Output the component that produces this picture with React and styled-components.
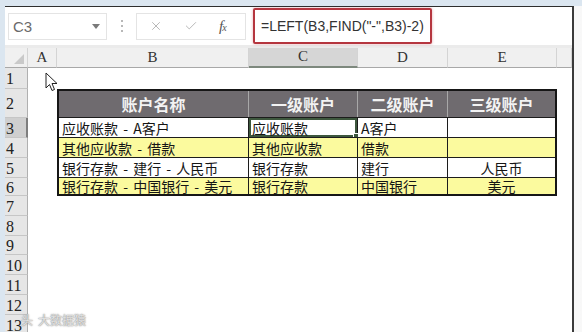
import React from 'react';
import styled, { createGlobalStyle, css } from 'styled-components';
import { X, Check } from 'lucide-react';

const GlobalStyle = createGlobalStyle`
  html, body {
    margin: 0;
    padding: 0;
    background: #fff;
  }
  * {
    box-sizing: border-box;
  }
`;

const CJK = `"Noto Sans CJK SC", "Liberation Sans", sans-serif`;
const SERIF = `"Liberation Serif", "DejaVu Serif", serif`;
const SANS = `"Liberation Sans", Arial, sans-serif`;

const Page = styled.div`
  position: relative;
  width: 582px;
  height: 332px;
  overflow: hidden;
  display: flex;
  background: linear-gradient(to right, #e6e7e9, #f8f8f8);
  border-top: 6px solid #dbe6f0;
  border-left: 5px solid #dbe6f0;
`;

const Window = styled.div`
  flex: none;
  width: 569px;
  height: 100%;
  display: flex;
  flex-direction: column;
  background: #fff;
  border-top: 1px solid #2e2e2e;
  border-right: 2px solid #3b3b3b;
  overflow: hidden;
`;

const FormulaBar = styled.div`
  flex: none;
  height: 41px;
  display: flex;
  align-items: center;
  padding-left: 3px;
  background: #fff;
  border-bottom: 3px solid #ebebeb;
`;

const NameBox = styled.div`
  width: 99px;
  height: 27px;
  display: flex;
  align-items: center;
  justify-content: space-between;
  padding: 0 6px 0 4px;
  border: 1px solid #e4e4e4;
  font: 15px ${SANS};
  color: #6a6a6a;
`;

const DropArrow = styled.span`
  width: 0;
  height: 0;
  border-left: 4px solid transparent;
  border-right: 4px solid transparent;
  border-top: 5px solid #7a7a7a;
`;

const Grip = styled.div`
  margin-left: 14px;
  display: flex;
  flex-direction: column;
  gap: 3px;

  span {
    width: 2px;
    height: 2px;
    background: #b8b8b8;
  }
`;

const FxBox = styled.div`
  margin-left: 13px;
  width: 110px;
  height: 27px;
  display: flex;
  align-items: center;
  gap: 21px;
  padding-left: 12px;
  border: 1px solid #e4e4e4;
  color: #b4b4b4;
`;

const FxLabel = styled.span`
  font: italic 15px ${SERIF};
  color: #555;
  letter-spacing: -1px;

  small {
    font-size: 10px;
  }
`;

const FormulaBox = styled.div`
  margin-left: 7px;
  width: 179px;
  height: 36px;
  display: flex;
  align-items: center;
  padding-left: 6px;
  border: 2px solid #b5363f;
  border-radius: 2px;
  box-shadow: 0 0 3px rgba(190, 60, 70, 0.45);
  font: 14px ${SANS};
  color: #333;
  white-space: nowrap;
`;

const Sheet = styled.div`
  display: grid;
  grid-template-columns: 23px 29px 192px 109px 90px 109px 1fr;
  grid-template-rows: 20px 21px 29px 20px 20px 20px 18px 20px 20px 19px 20px 20px 20px 20px;
`;

const Corner = styled.div`
  position: relative;
  background: #f0f0f0;
  border-right: 1px solid #d4d4d4;
  border-bottom: 1px solid #a8a8a8;

  &::after {
    content: '';
    position: absolute;
    right: 3px;
    bottom: 3px;
    border-left: 10px solid transparent;
    border-bottom: 10px solid #c9c9c9;
  }
`;

const ColHead = styled.div`
  display: flex;
  align-items: flex-end;
  justify-content: center;
  padding-bottom: 1px;
  background: #f0f0f0;
  border-right: 1px solid #d4d4d4;
  border-bottom: 1px solid #a8a8a8;
  font: 15px ${SERIF};
  color: #333;

  ${(p) =>
    p.$selected &&
    css`
      background: #d6d6d6;
      border-bottom: 2px solid #7d887d;
    `}
`;

const RowHead = styled.div`
  grid-column: 1;
  grid-row: ${(p) => p.$row};
  display: flex;
  align-items: center;
  padding: 2px 0 0 1px;
  background: #e6e6e6;
  border-bottom: 1px solid #c6c6c6;
  border-right: 1px solid #b0b0b0;
  font: 16px ${SERIF};
  color: #222;
  line-height: 1;

  ${(p) =>
    p.$selected &&
    css`
      background: #cfcfcf;
      border-right: 2px solid #7e7e7e;
    `}
`;

const Table = styled.div`
  grid-column: 3 / 7;
  grid-row: 3 / 8;
  display: grid;
  grid-template-columns: 190px 109px 90px 1fr;
  grid-template-rows: 26px 20px 20px 20px 1fr;
  border: 2px solid #161616;
`;

const HeadCell = styled.div`
  display: flex;
  align-items: center;
  justify-content: center;
  background: #6f6b6f;
  color: #f3f3f3;
  font: bold 16px ${CJK};
  line-height: 1;
  border-right: 1px solid #a8a8a8;

  &:nth-child(4) {
    border-right: none;
  }
`;

const Cell = styled.div`
  position: relative;
  display: flex;
  align-items: center;
  justify-content: ${(p) => (p.$center ? 'center' : 'flex-start')};
  padding-left: ${(p) => (p.$center ? '0' : '3px')};
  background: ${(p) => (p.$yellow ? '#fbfa9e' : '#fff')};
  border-top: 1px solid #1c1c1c;
  border-right: ${(p) => (p.$last ? 'none' : '1px solid #1c1c1c')};
  font: 14px ${CJK};
  line-height: 1;
  color: #151515;
  white-space: pre;
  word-spacing: 2px;

  ${(p) =>
    p.$selected &&
    css`
      box-shadow: inset 0 0 0 2px #3d573d;

      &::after {
        content: '';
        position: absolute;
        right: -3px;
        bottom: -3px;
        width: 5px;
        height: 5px;
        background: #3d573d;
        border: 1px solid #fff;
      }
    `}
`;

const Cursor = styled.svg`
  position: absolute;
  left: 40px;
  top: 66px;
`;

const Watermark = styled.div`
  position: absolute;
  left: 16px;
  bottom: 4px;
  display: flex;
  align-items: center;
  gap: 5px;
  font: 12px ${CJK};
  color: rgba(235, 235, 235, 0.9);
  text-shadow: 0 0 1px #888, 0 0 2px #999;
`;

const columns = ['A', 'B', 'C', 'D', 'E', ''];
const headers = ['账户名称', '一级账户', '二级账户', '三级账户'];
const rows = [
  ['应收账款 - A客户', '应收账款', 'A客户', ''],
  ['其他应收款 - 借款', '其他应收款', '借款', ''],
  ['银行存款 - 建行 - 人民币', '银行存款', '建行', '人民币'],
  ['银行存款 - 中国银行 - 美元', '银行存款', '中国银行', '美元'],
];

export default function App() {
  return (
    <>
      <GlobalStyle />
      <Page>
        <Window>
          <FormulaBar>
            <NameBox>
              C3
              <DropArrow />
            </NameBox>
            <Grip>
              <span />
              <span />
              <span />
            </Grip>
            <FxBox>
              <X size={14} strokeWidth={1.6} />
              <Check size={14} strokeWidth={1.6} />
              <FxLabel>
                f<small>x</small>
              </FxLabel>
            </FxBox>
            <FormulaBox>=LEFT(B3,FIND("-",B3)-2)</FormulaBox>
          </FormulaBar>

          <Sheet>
            <Corner />
            {columns.map((c) => (
              <ColHead key={c || 'extra'} $selected={c === 'C'}>
                {c}
              </ColHead>
            ))}

            {Array.from({ length: 13 }, (_, i) => (
              <RowHead key={i} $row={i + 2} $selected={i === 2}>
                {i + 1}
              </RowHead>
            ))}

            <Table>
              {headers.map((h) => (
                <HeadCell key={h}>{h}</HeadCell>
              ))}
              {rows.map((r, ri) =>
                r.map((v, ci) => (
                  <Cell
                    key={ri + '-' + ci}
                    $yellow={ri % 2 === 1}
                    $center={ci === 3}
                    $last={ci === 3}
                    $selected={ri === 0 && ci === 1}
                  >
                    {v}
                  </Cell>
                ))
              )}
            </Table>
          </Sheet>
        </Window>

        <Cursor width="13" height="20" viewBox="0 0 13 20">
          <path
            d="M1 1 L1 16 L4.5 12.5 L7 18.5 L9.5 17.5 L7 11.5 L12 11.5 Z"
            fill="#fff"
            stroke="#222"
            strokeWidth="1"
            strokeLinejoin="round"
          />
        </Cursor>

        <Watermark>
          <span>头</span>
          <span>大数据猿</span>
        </Watermark>
      </Page>
    </>
  );
}
